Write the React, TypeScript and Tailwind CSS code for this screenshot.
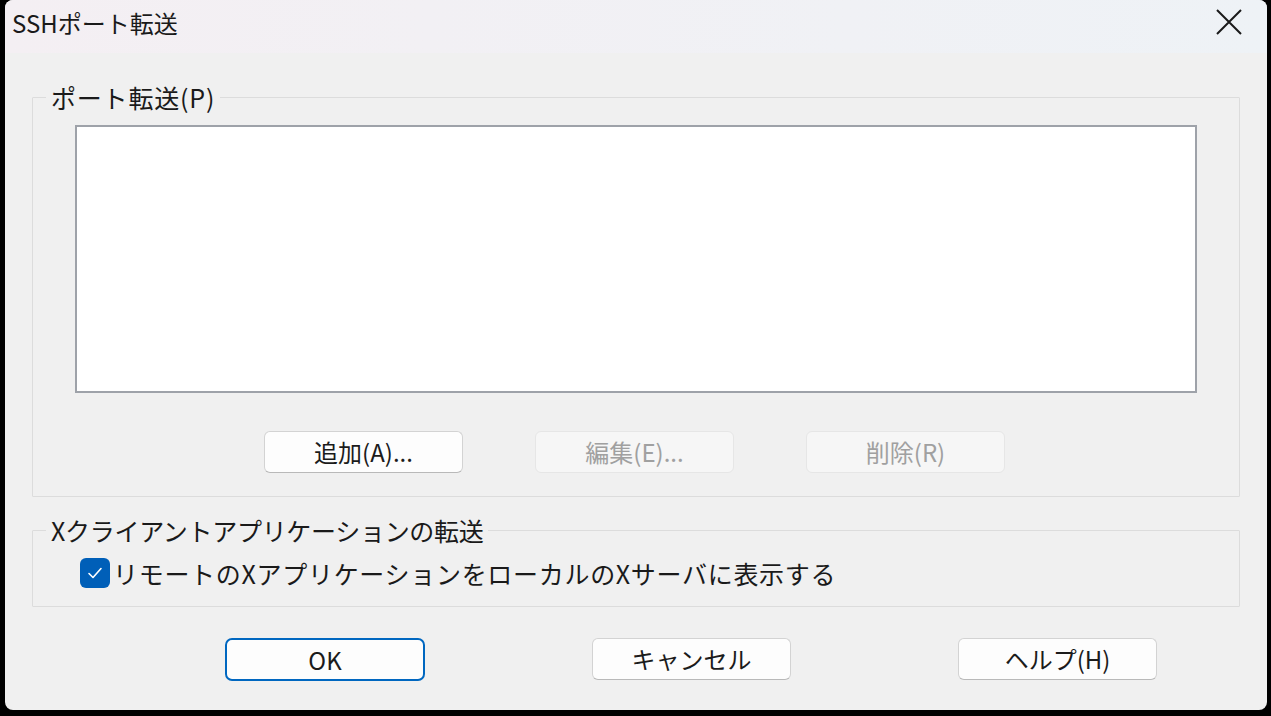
import React from "react";

const font = { fontFamily: '"Noto Sans CJK JP", "Noto Sans", sans-serif' };

function Btn({ label, disabled, primary }: { label: string; disabled?: boolean; primary?: boolean }) {
  const base = "flex items-center justify-center w-[199px] h-[42px] text-[24px] leading-[30px]";
  if (primary)
    return <div className={`${base} h-[43px] w-[200px] rounded-[7px] border-2 border-[#0067c0] bg-[#fdfdfd] text-[#1b1b1b]`}>{label}</div>;
  if (disabled)
    return <div className={`${base} rounded-[6px] border border-[#e6e6e6] bg-[#f6f6f6] text-[#a0a0a0]`}>{label}</div>;
  return <div className={`${base} rounded-[6px] border border-[#d3d3d3] border-b-[#b9b9b9] bg-[#fdfdfd] text-[#1b1b1b]`}>{label}</div>;
}

export default function App() {
  return (
    <div className="w-[1271px] h-[716px] bg-black pl-[5px] pr-[4px] pb-[6px] flex" style={font}>
      <div className="flex-1 flex flex-col rounded-[8px] overflow-hidden bg-[#f0f0f0]">
        <div className="h-[53px] shrink-0 flex items-center justify-between pl-[7px] pr-[25px] bg-gradient-to-r from-[#f4eff3] to-[#eef2f6]">
          <span className="text-[24px] leading-[30px] text-[#1a1a1a] -mt-[8px]">SSHポート転送</span>
          <svg width="26" height="26" viewBox="0 0 26 26" className="-mt-[9px]">
            <path d="M1 1 L25 25 M25 1 L1 25" stroke="#1a1a1a" strokeWidth="2" fill="none" />
          </svg>
        </div>
        <div className="flex flex-col px-[27px] pt-[29px]">
          <fieldset className="border border-[#dcdcdc] rounded-[1px]">
            <legend className="ml-[13px] px-[5px] text-[25px] leading-[30px] tracking-[0.8px] text-[#1a1a1a]">ポート転送(P)</legend>
            <div className="flex flex-col px-[42px] pt-[13px] pb-[23px]">
              <div className="h-[268px] bg-white border-2 border-[#9ea2a9]" />
              <div className="flex justify-center gap-[72px] mt-[38px] pr-[3px]">
                <Btn label="追加(A)..." />
                <Btn label="編集(E)..." disabled />
                <Btn label="削除(R)" disabled />
              </div>
            </div>
          </fieldset>
          <fieldset className="border border-[#dcdcdc] rounded-[1px] mt-[18px]">
            <legend className="ml-[13px] px-[5px] text-[25px] leading-[30px] tracking-[-0.3px] text-[#1a1a1a]">Xクライアントアプリケーションの転送</legend>
            <div className="flex items-center pl-[47px] pt-[13px] pb-[18px]">
              <div className="w-[30px] h-[30px] rounded-[6px] bg-[#005fb8] flex items-center justify-center shrink-0">
                <svg width="18" height="18" viewBox="0 0 18 18">
                  <path d="M3 9.5 L7 13.5 L15 4.5" stroke="#ffffff" strokeWidth="1.6" fill="none" strokeLinecap="round" strokeLinejoin="round" />
                </svg>
              </div>
              <span className="ml-[3px] text-[25px] leading-[30px] tracking-[0.7px] text-[#1a1a1a]">リモートのXアプリケーションをローカルのXサーバに表示する</span>
            </div>
          </fieldset>
        </div>
        <div className="flex pl-[220px] gap-[167px] mt-[31px]">
          <Btn label="OK" primary />
          <Btn label="キャンセル" />
          <Btn label="ヘルプ(H)" />
        </div>
      </div>
    </div>
  );
}
